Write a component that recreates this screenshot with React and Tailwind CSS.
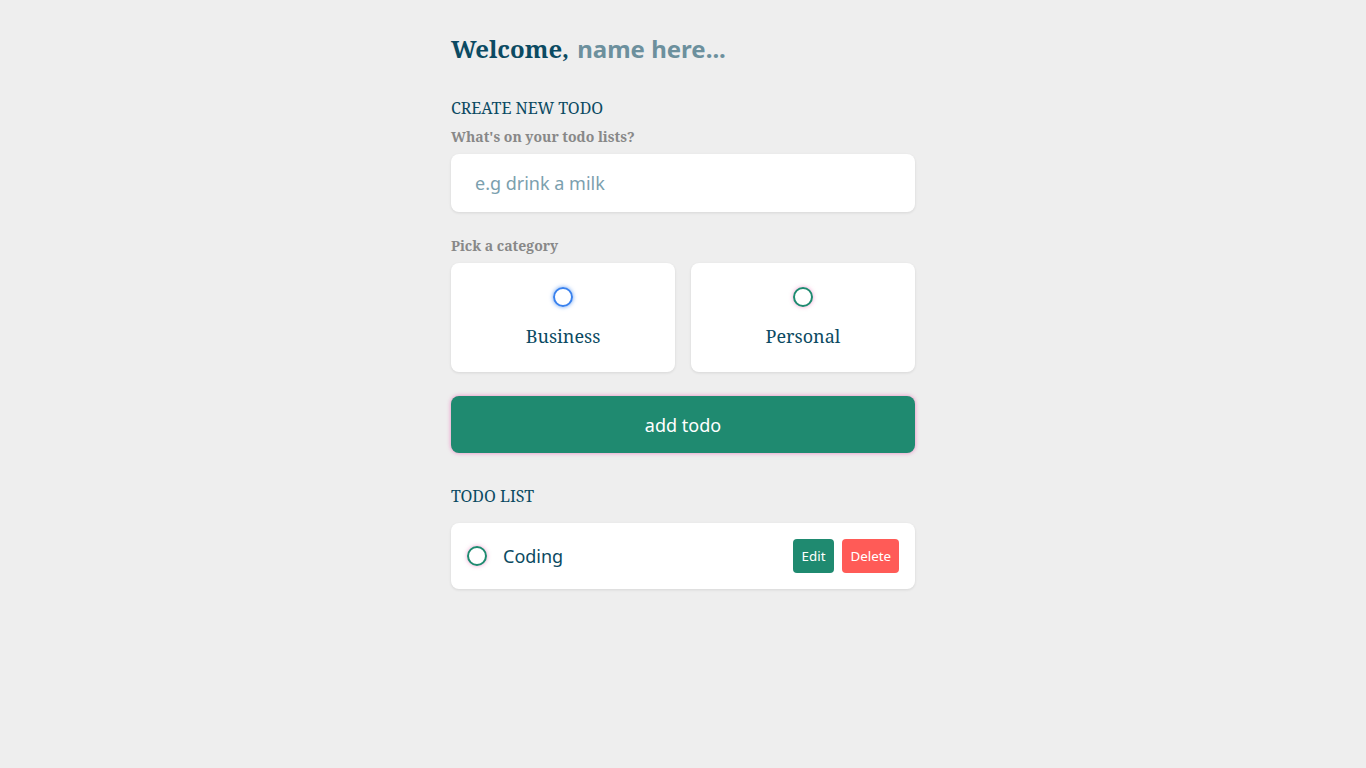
export default function App() {
  const serif = { fontFamily: '"Noto Serif", "DejaVu Serif", serif' };
  return (
    <div className="min-h-screen bg-[#eeeeee]" style={{ fontFamily: '"Noto Sans", "Open Sans", sans-serif' }}>
      <main className="mx-auto max-w-[512px] px-6">
        <section className="pt-[31px]">
          <div className="flex items-center text-[24px] font-bold leading-[36px]">
            <span className="text-[#0b4a62]" style={serif}>Welcome,</span>
            <input
              type="text"
              placeholder="name here..."
              className="ml-2 min-w-0 flex-1 bg-transparent font-bold text-[#0b4a62] outline-none placeholder:text-[#6c909d]"
            />
          </div>
        </section>

        <section className="mt-[29px]">
          <h3 className="text-[16px] leading-6 text-[#0b4a62]" style={serif}>CREATE NEW TODO</h3>
          <h4 className="mt-[7px] mb-[7px] text-[14px] font-bold leading-5 text-[#888888]" style={serif}>What's on your todo lists?</h4>
          <input
            type="text"
            placeholder="e.g drink a milk"
            className="block w-full rounded-lg bg-white px-6 py-4 text-[18px] leading-[26px] text-[#0b4a62] shadow-[0_1px_3px_rgba(0,0,0,0.1)] outline-none placeholder:text-[#7ba0ae]"
          />
          <h4 className="mt-6 mb-[7px] text-[14px] font-bold leading-5 text-[#888888]" style={serif}>Pick a category</h4>
          <div className="grid grid-cols-2 gap-4">
            <label className="flex cursor-pointer flex-col items-center justify-center rounded-lg bg-white px-6 pt-6 pb-[23px] shadow-[0_1px_3px_rgba(0,0,0,0.1)]">
              <span className="block h-5 w-5 rounded-full border-2 border-[#3a82ee] shadow-[0_0_4px_rgba(58,130,238,0.75)]"></span>
              <div className="mt-[17px] text-[18px] leading-[25px] text-[#0b4a62]" style={serif}>Business</div>
            </label>
            <label className="flex cursor-pointer flex-col items-center justify-center rounded-lg bg-white px-6 pt-6 pb-[23px] shadow-[0_1px_3px_rgba(0,0,0,0.1)]">
              <span className="block h-5 w-5 rounded-full border-2 border-[#1f8a70] shadow-[0_0_4px_rgba(234,64,164,0.5)]"></span>
              <div className="mt-[17px] text-[18px] leading-[25px] text-[#0b4a62]" style={serif}>Personal</div>
            </label>
          </div>
          <button className="mt-6 block w-full rounded-lg bg-[#1f8a70] px-6 pt-[17px] pb-[15px] text-[18px] leading-[25px] text-white shadow-[0_0_4px_rgba(234,64,164,0.6)]">
            add todo
          </button>
        </section>

        <section className="mt-[31px]">
          <h3 className="mb-[15px] text-[16px] leading-6 text-[#0b4a62]" style={serif}>TODO LIST</h3>
          <div className="flex items-center rounded-lg bg-white p-4 shadow-[0_1px_3px_rgba(0,0,0,0.1)]">
            <label className="mr-4 block">
              <span className="block h-5 w-5 rounded-full border-2 border-[#1f8a70] shadow-[0_0_4px_rgba(234,64,164,0.5)]"></span>
            </label>
            <div className="flex-1 text-[18px] leading-[26px] text-[#0b4a62]">Coding</div>
            <div className="flex items-center">
              <button className="mr-2 block rounded bg-[#1f8a70] py-2 pl-[9px] pr-[9px] text-[13.33px] leading-[18px] text-white">Edit</button>
              <button className="block rounded bg-[#ff5b57] p-2 text-[13.33px] leading-[18px] text-white">Delete</button>
            </div>
          </div>
        </section>
      </main>
    </div>
  );
}
